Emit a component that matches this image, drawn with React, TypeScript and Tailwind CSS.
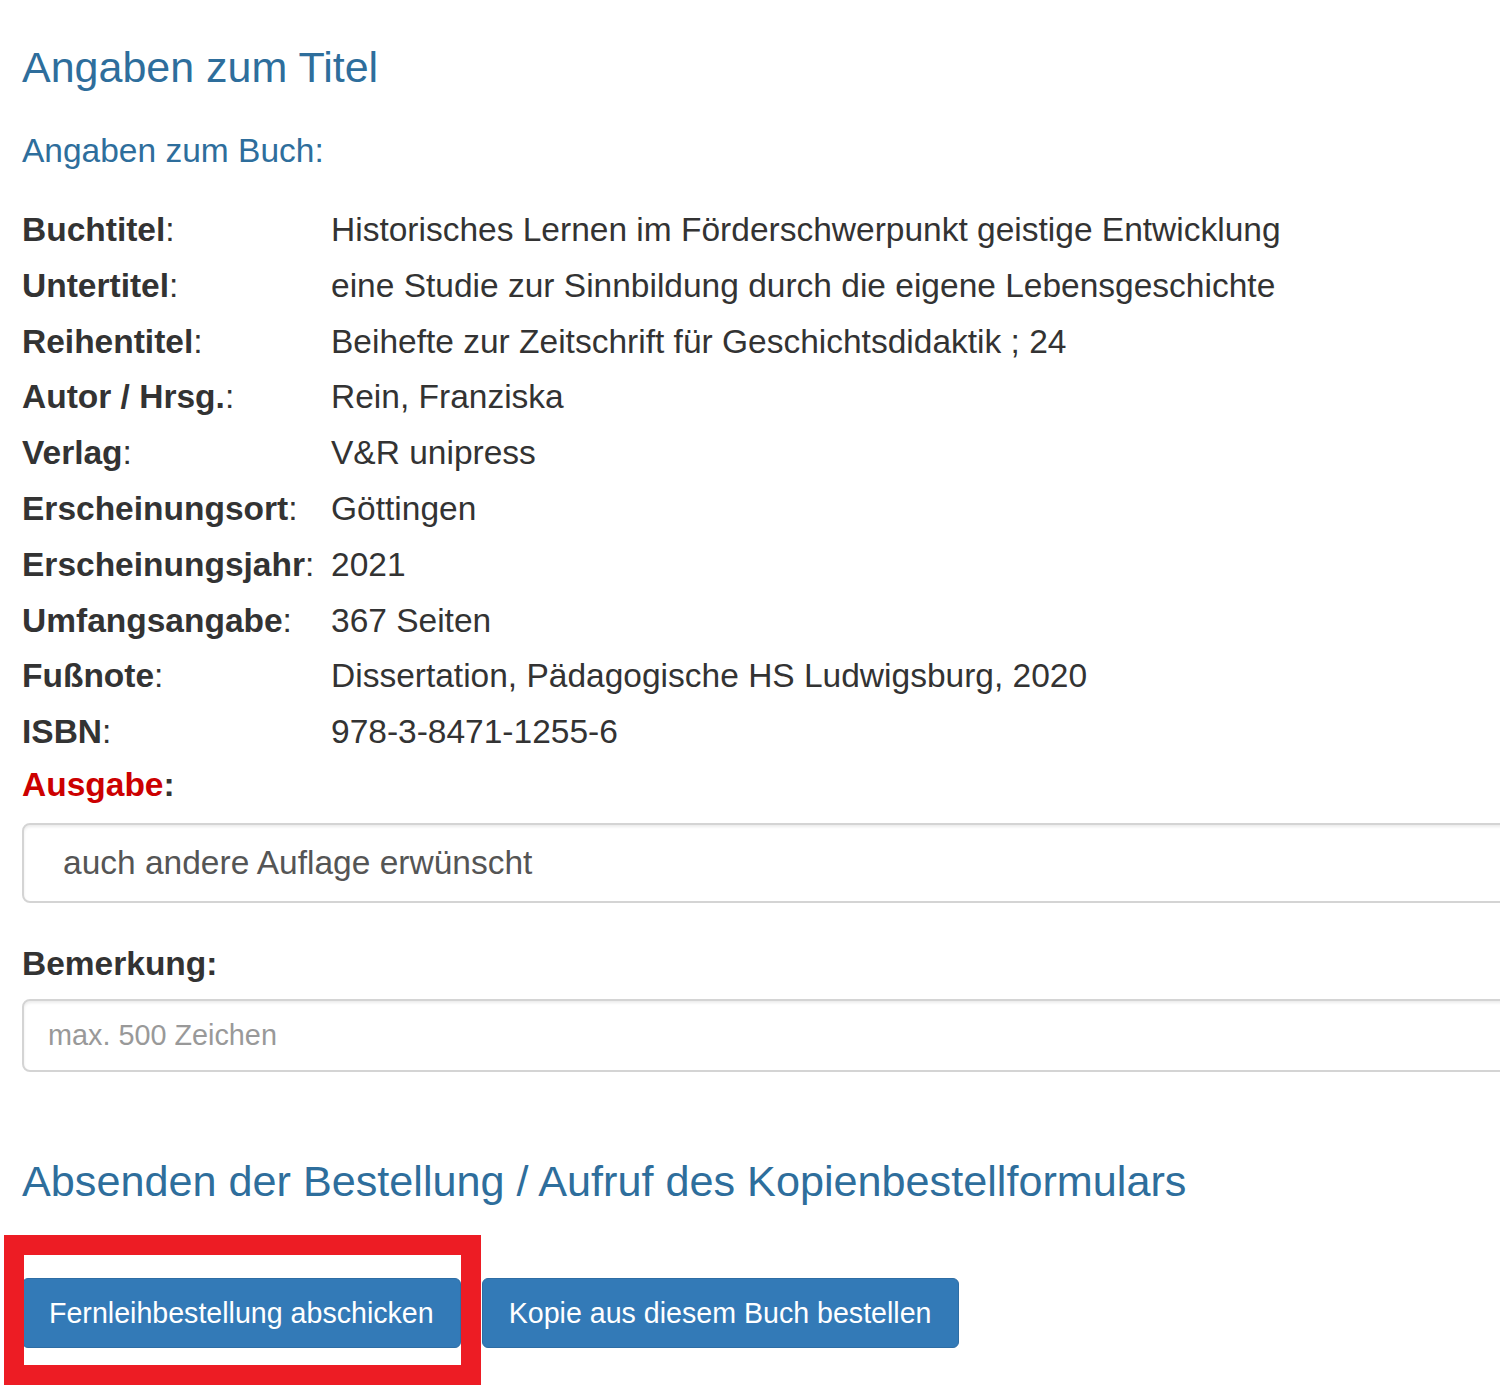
import React from "react";

const rows: [string, string][] = [
  ["Buchtitel", "Historisches Lernen im Förderschwerpunkt geistige Entwicklung"],
  ["Untertitel", "eine Studie zur Sinnbildung durch die eigene Lebensgeschichte"],
  ["Reihentitel", "Beihefte zur Zeitschrift für Geschichtsdidaktik ; 24"],
  ["Autor / Hrsg.", "Rein, Franziska"],
  ["Verlag", "V&R unipress"],
  ["Erscheinungsort", "Göttingen"],
  ["Erscheinungsjahr", "2021"],
  ["Umfangsangabe", "367 Seiten"],
  ["Fußnote", "Dissertation, Pädagogische HS Ludwigsburg, 2020"],
  ["ISBN", "978-3-8471-1255-6"],
];

export default function App() {
  return (
    <div
      className="relative w-[1500px] h-[1387px] overflow-hidden bg-white text-[#333]"
      style={{ fontFamily: '"Liberation Sans", Arial, sans-serif' }}
    >
      <div className="pl-[22px] pt-[43px]">
        <h1 className="text-[43px] leading-[48px] text-[#2e6e9c] font-normal">
          Angaben zum Titel
        </h1>
        <h2 className="mt-[36px] text-[33.5px] leading-[48px] text-[#2e6e9c] font-normal">
          Angaben zum Buch:
        </h2>
        <div className="mt-[27px] grid grid-cols-[309px_1fr]">
          {rows.map(([k, v]) => (
            <React.Fragment key={k}>
              <div className="h-[55.8px] leading-[55.8px] text-[33.5px] whitespace-nowrap">
                <span className="font-bold">{k}</span>:
              </div>
              <div className="h-[55.8px] leading-[55.8px] text-[33.5px] whitespace-nowrap">
                {v}
              </div>
            </React.Fragment>
          ))}
        </div>
        <div className="mt-[1px] text-[33.5px] leading-[48px] font-bold">
          <span className="text-[#cc0000]">Ausgabe</span>:
        </div>
        <div className="mt-[14px] w-[1600px] h-[80px] rounded-[8px] border-2 border-[#d4d4d4] bg-white shadow-[inset_0_2px_3px_rgba(0,0,0,0.08)] flex items-center pl-[39px] text-[33.5px] text-[#555]">
          auch andere Auflage erwünscht
        </div>
        <div className="mt-[37px] text-[33.5px] leading-[48px] font-bold">Bemerkung:</div>
        <div className="mt-[11px] w-[1600px] h-[73px] rounded-[8px] border-2 border-[#d4d4d4] bg-white shadow-[inset_0_2px_3px_rgba(0,0,0,0.08)] flex items-center pl-[24px] text-[28.8px] text-[#999]">
          max. 500 Zeichen
        </div>
        <h2 className="mt-[85px] text-[43.2px] leading-[48px] text-[#2e6e9c] font-normal whitespace-nowrap">
          Absenden der Bestellung / Aufruf des Kopienbestellformulars
        </h2>
        <div className="mt-[73px] flex gap-[21px]">
          <button className="h-[70px] px-[26px] rounded-[6px] bg-[#337ab7] border border-[#2e6da4] text-white text-[28.6px] whitespace-nowrap">
            Fernleihbestellung abschicken
          </button>
          <button className="h-[70px] px-[26px] rounded-[6px] bg-[#337ab7] border border-[#2e6da4] text-white text-[28.6px] whitespace-nowrap">
            Kopie aus diesem Buch bestellen
          </button>
        </div>
      </div>
      <div className="absolute left-[4px] top-[1235px] w-[477px] h-[150px] border-[20px] border-[#ed1c24] pointer-events-none" />
    </div>
  );
}
